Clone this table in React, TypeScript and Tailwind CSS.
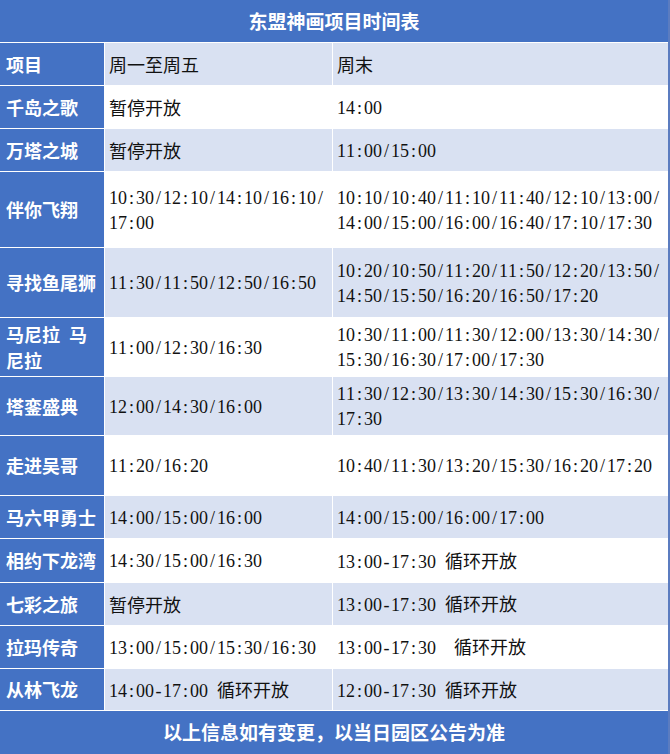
const CJK = '"Noto Sans CJK SC", "Noto Sans CJK JP", sans-serif';

type Row = { name: string; weekday: string; weekend: string; h: string; bg: 'white' | 'light' };

const rows: Row[] = [
  { name: '千岛之歌', weekday: '暂停开放', weekend: '14:00', h: 'h-[43px]', bg: 'white' },
  { name: '万塔之城', weekday: '暂停开放', weekend: '11:00/15:00', h: 'h-[43px]', bg: 'light' },
  { name: '伴你飞翔', weekday: '10:30/12:10/14:10/16:10/\n17:00', weekend: '10:10/10:40/11:10/11:40/12:10/13:00/\n14:00/15:00/16:00/16:40/17:10/17:30', h: 'h-[76px]', bg: 'white' },
  { name: '寻找鱼尾狮', weekday: '11:30/11:50/12:50/16:50', weekend: '10:20/10:50/11:20/11:50/12:20/13:50/\n14:50/15:50/16:20/16:50/17:20', h: 'h-[70px]', bg: 'light' },
  { name: '马尼拉 马\n尼拉', weekday: '11:00/12:30/16:30', weekend: '10:30/11:00/11:30/12:00/13:30/14:30/\n15:30/16:30/17:00/17:30', h: 'h-[59px]', bg: 'white' },
  { name: '塔銮盛典', weekday: '12:00/14:30/16:00', weekend: '11:30/12:30/13:30/14:30/15:30/16:30/\n17:30', h: 'h-[59px]', bg: 'light' },
  { name: '走进吴哥', weekday: '11:20/16:20', weekend: '10:40/11:30/13:20/15:30/16:20/17:20', h: 'h-[60px]', bg: 'white' },
  { name: '马六甲勇士', weekday: '14:00/15:00/16:00', weekend: '14:00/15:00/16:00/17:00', h: 'h-[43px]', bg: 'light' },
  { name: '相约下龙湾', weekday: '14:30/15:00/16:30', weekend: '13:00-17:30 循环开放', h: 'h-[44px]', bg: 'white' },
  { name: '七彩之旅', weekday: '暂停开放', weekend: '13:00-17:30 循环开放', h: 'h-[43px]', bg: 'light' },
  { name: '拉玛传奇', weekday: '13:00/15:00/15:30/16:30', weekend: '13:00-17:30  循环开放', h: 'h-[43px]', bg: 'white' },
  { name: '从林飞龙', weekday: '14:00-17:00 循环开放', weekend: '12:00-17:30 循环开放', h: 'h-[42px]', bg: 'light' },
];

// half-width cells for ascii (like SimSun), full-width CJK
function Line({ text }: { text: string }) {
  return (
    <div className="whitespace-nowrap">
      {Array.from(text).map((ch, i) =>
        ch.charCodeAt(0) < 128 ? (
          <span key={i} className="inline-block w-[9px] text-center text-[18px] font-['Liberation_Serif',serif]">
            {ch === ' ' ? '\u00a0' : ch}
          </span>
        ) : (
          <span key={i} className="text-[18px]">{ch}</span>
        )
      )}
    </div>
  );
}

function Cell({ text }: { text: string }) {
  return (
    <div>
      {text.split('\n').map((l, i) => <Line key={i} text={l} />)}
    </div>
  );
}

export default function App() {
  return (
    <div className="w-[670px] h-[754px] bg-white border-r-2 border-[#5b7cc0] flex flex-col" style={{ fontFamily: CJK }}>
      <div className="h-[43px] shrink-0 bg-[#4472c4] border-b border-white flex items-center justify-center text-white text-[19px] font-bold">
        东盟神画项目时间表
      </div>

      <div className="h-[43px] shrink-0 flex border-b border-white">
        <div className="w-[105px] shrink-0 bg-[#4472c4] border-r border-white flex items-center pl-[6px] text-white text-[18px] font-bold">项目</div>
        <div className="w-[228px] shrink-0 bg-[#d9e1f2] border-r border-white flex items-center pl-[4px] text-[#111] text-[18px]">周一至周五</div>
        <div className="flex-1 bg-[#d9e1f2] flex items-center pl-[4px] text-[#111] text-[18px]">周末</div>
      </div>

      {rows.map((r) => {
        const bg = r.bg === 'light' ? 'bg-[#d9e1f2]' : 'bg-white';
        return (
          <div key={r.name} className={`${r.h} shrink-0 flex border-b border-white`}>
            <div className="w-[105px] shrink-0 bg-[#4472c4] border-r border-white flex items-center pl-[6px] text-white font-bold leading-[24px]">
              <Cell text={r.name} />
            </div>
            <div className={`w-[228px] shrink-0 ${bg} border-r border-white flex items-center pl-[4px] text-[#111] leading-[24px]`}>
              <Cell text={r.weekday} />
            </div>
            <div className={`flex-1 ${bg} flex items-center pl-[4px] text-[#111] leading-[24px]`}>
              <Cell text={r.weekend} />
            </div>
          </div>
        );
      })}

      <div className="flex-1 bg-[#4472c4] flex items-center justify-center text-white text-[19px] font-bold">
        以上信息如有变更，以当日园区公告为准
      </div>
    </div>
  );
}
